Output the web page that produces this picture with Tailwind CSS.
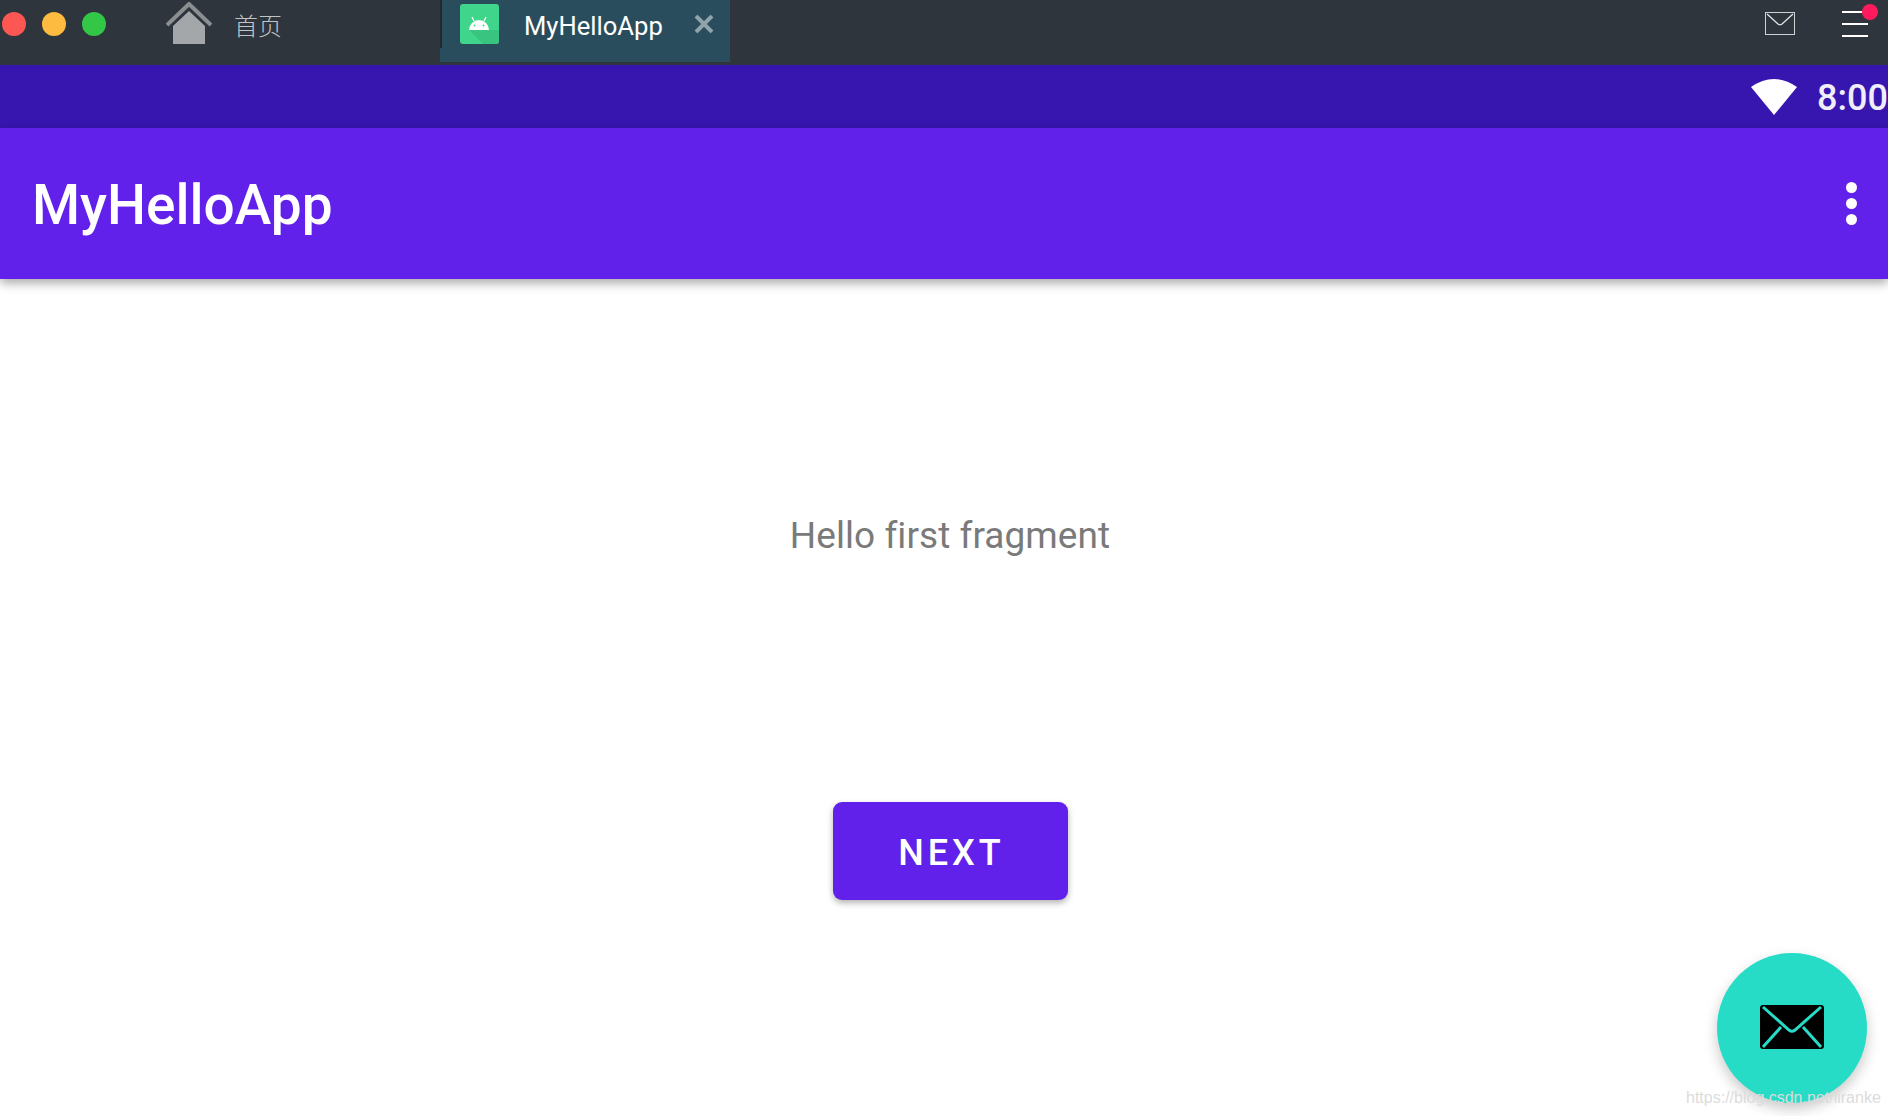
<!DOCTYPE html>
<html lang="en">
  <head>
    <meta charset="UTF-8" />
    <title>MyHelloApp</title>
    <script src="https://cdn.jsdelivr.net/npm/@tailwindcss/browser@4"></script>
  </head>
  <body class="bg-white font-['Roboto',sans-serif] overflow-hidden">
    <div class="relative w-[1888px] h-[1116px] overflow-hidden flex flex-col">
      <!-- Emulator title bar -->
      <header class="h-[65px] shrink-0 bg-[#2e353c] flex items-start">
        <div class="flex gap-[16px] pt-[12px] pl-[2px] w-[166px] shrink-0">
          <span class="w-[24px] h-[24px] rounded-full bg-[#fc5753]"></span>
          <span class="w-[24px] h-[24px] rounded-full bg-[#fdbc40]"></span>
          <span class="w-[24px] h-[24px] rounded-full bg-[#33c748]"></span>
        </div>
        <svg class="mt-[2px] shrink-0 blur-[0.5px]" width="46" height="43" viewBox="0 0 46 43">
          <path d="M1 23 L23 2 L45 23" fill="none" stroke="#8b8f92" stroke-width="4" />
          <path d="M7 42 V24 L23 9 L39 24 V42 Z" fill="#a4a7a9" />
        </svg>
        <span class="ml-[22px] mt-[10px] w-[206px] shrink-0 text-[24px] leading-[30px] font-light text-[#c0c3c5] font-['Noto_Sans_CJK_SC',sans-serif]">首页</span>
        <div class="relative w-[290px] h-[62px] shrink-0 bg-[#2a4d5e] flex items-start pl-[20px] pt-[4px]">
          <span class="absolute left-0 top-0 w-[2px] h-[48px] bg-[#22282d]"></span>
          <svg class="shrink-0 blur-[0.5px]" width="39" height="40" viewBox="0 0 39 40">
            <rect width="39" height="40" rx="3" fill="#3fd58a" />
            <path d="M9 26 L23 40 H36 a3 3 0 0 0 3 -3 V26 Z" fill="#39c580" />
            <path d="M9 26 a10 10 0 0 1 20 0 Z" fill="#fff" />
            <path d="M14 17 L12 13 M24 17 L26 13" stroke="#fff" stroke-width="1.2" />
            <circle cx="14.5" cy="21.5" r="1" fill="#3fd58a" />
            <circle cx="23.5" cy="21.5" r="1" fill="#3fd58a" />
          </svg>
          <span class="ml-[25px] mt-[7px] w-[139px] shrink-0 text-[25.6px] leading-[30px] text-white font-['Roboto',sans-serif] whitespace-nowrap">MyHelloApp</span>
          <svg class="ml-[31px] mt-[11px] shrink-0" width="20" height="18" viewBox="0 0 20 18">
            <path d="M2 1 L18 17 M18 1 L2 17" stroke="#93a3ac" stroke-width="4" />
          </svg>
        </div>
        <div class="flex-1"></div>
        <svg class="mt-[12px] shrink-0" width="30" height="23" viewBox="0 0 30 23">
          <rect x="0.5" y="0.5" width="29" height="22" fill="none" stroke="#cfd1d2" />
          <path d="M2 2 L13 12 Q15 13.5 17 12 L28 2" fill="none" stroke="#e8e9ea" stroke-width="1.2" />
        </svg>
        <div class="relative ml-[47px] mr-[20px] mt-[11px] w-[26px] flex flex-col gap-[10px]">
          <span class="h-[2px] bg-white"></span>
          <span class="h-[2px] bg-white"></span>
          <span class="h-[2px] bg-white"></span>
          <span class="absolute left-[20px] top-[-7px] w-[16px] h-[16px] rounded-full bg-[#ff1a5e]"></span>
        </div>
      </header>

      <!-- Android status bar -->
      <div class="h-[63px] shrink-0 bg-[#3716b0] flex items-center justify-end">
        <svg class="shrink-0" width="46" height="37" viewBox="0 0 46 37">
          <path d="M0 9 Q23 -7 46 9 L23 37 Z" fill="#fff" />
        </svg>
        <span class="ml-[20px] mt-[2px] w-[71px] text-[36px] leading-[44px] font-medium text-[#f1eefb] whitespace-nowrap">8:00</span>
      </div>

      <!-- App bar -->
      <div class="relative z-10 h-[151px] shrink-0 bg-[#6121ea] flex items-center justify-between pl-[32px] pr-[31px] shadow-[0_4px_10px_rgba(0,0,0,0.35)]">
        <h1 class="mt-[2px] text-[55px] leading-[64px] font-medium text-white">MyHelloApp</h1>
        <div class="flex flex-col gap-[5px]">
          <span class="w-[11px] h-[11px] rounded-full bg-white"></span>
          <span class="w-[11px] h-[11px] rounded-full bg-white"></span>
          <span class="w-[11px] h-[11px] rounded-full bg-white"></span>
        </div>
      </div>

      <!-- First fragment -->
      <main class="flex-1 flex flex-col items-center pl-[12px]">
        <p class="mt-[234px] text-[37px] leading-[46px] tracking-[0.05px] text-[#7a7a7a] whitespace-nowrap">Hello first fragment</p>
        <button class="mt-[243px] w-[235px] h-[98px] rounded-[9px] bg-[#6121ea] text-white text-[36px] font-medium tracking-[4px] pt-[4px] pl-[3px] shadow-[0_3px_6px_rgba(0,0,0,0.3)]">NEXT</button>
      </main>

      <!-- FAB -->
      <div class="absolute left-[1717px] top-[953px] w-[150px] h-[150px] rounded-full bg-[#26dcc6] flex items-center justify-center shadow-[0_6px_14px_rgba(0,0,0,0.22)]">
        <svg class="-mt-[3px] blur-[0.4px]" width="64" height="44" viewBox="0 0 64 44">
          <path d="M3 0 H61 a3 3 0 0 1 3 3 V41 a3 3 0 0 1 -3 3 H3 a3 3 0 0 1 -3 -3 V3 a3 3 0 0 1 3 -3 Z" fill="#000" />
          <path d="M3 2 L29 25 Q32 27.5 35 25 L61 2 M3 42 L21 22 M61 42 L43 22" fill="none" stroke="#26dcc6" stroke-width="3" />
        </svg>
      </div>

      <!-- Watermark -->
      <span class="absolute left-[1686px] top-[1088px] text-[16px] leading-[20px] text-[#dcdcdc] font-['Liberation_Sans',sans-serif] whitespace-nowrap">https://blog.csdn.net/liranke</span>
    </div>
  </body>
</html>
